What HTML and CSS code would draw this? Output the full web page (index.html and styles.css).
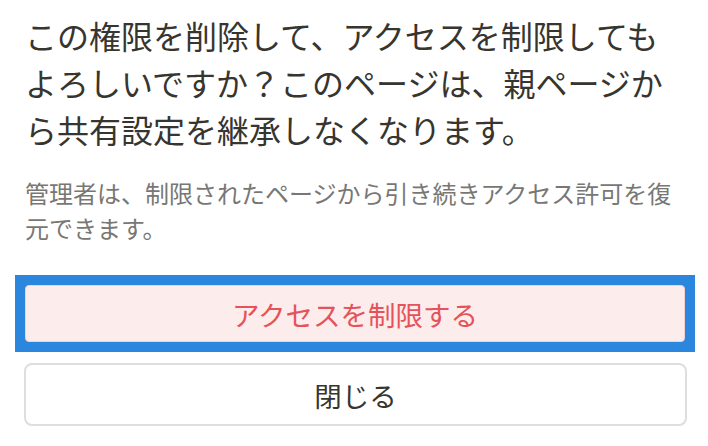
FILE: index.html
```html
<!DOCTYPE html>
<html lang="ja">

<head>
  <meta charset="UTF-8">
  <meta name="viewport" content="width=device-width, initial-scale=1.0">
  <title>アクセスを制限</title>
  <link rel="stylesheet" href="styles.css">
</head>

<body>
  <div class="dialog">
    <p class="title">この権限を削除して、アクセスを制限してもよろしいですか？このページは、親ページから共有設定を継承しなくなります。</p>
    <p class="note">管理者は、制限されたページから引き続きアクセス許可を復元できます。</p>
    <div class="actions">
      <div class="focus-ring">
        <button class="danger">アクセスを制限する</button>
      </div>
      <button class="close">閉じる</button>
    </div>
  </div>
</body>

</html>
```

FILE: styles.css
```css
body {
  margin: 0;
  background: #fff;
  font-family: "Noto Sans CJK JP", "Noto Sans", sans-serif;
}

.dialog {
  padding: 12px 21px 0 25px;
}

.title {
  margin: 0 10px 0 0;
  font-size: 32px;
  line-height: 47px;
  color: #37352f;
}

.note {
  margin: 22px 0 0;
  font-size: 24px;
  line-height: 35px;
  color: #787774;
}

.actions {
  margin-top: 30px;
  display: flex;
  flex-direction: column;
  gap: 11px;
}

.actions button {
  font-family: inherit;
  font-size: 27.5px;
  cursor: pointer;
}

.focus-ring {
  width: 660px;
  margin-left: -10px;
  padding: 10px;
  background: #2b86de;
}

.danger {
  display: block;
  width: 660px;
  height: 57px;
  background: #fdecec;
  border: 1px solid #f6cfd0;
  border-radius: 4px;
  color: #e5535a;
}

.close {
  width: 663px;
  margin-left: -1px;
  height: 63px;
  background: #fff;
  border: 2px solid #dedede;
  border-radius: 8px;
  color: #37352f;
}
```
